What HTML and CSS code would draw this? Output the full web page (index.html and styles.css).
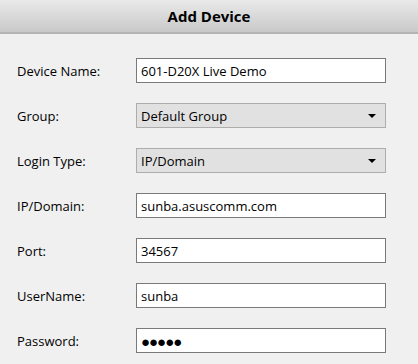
FILE: index.html
```html
<!DOCTYPE html>
<html>
<head>
<meta charset="utf-8">
<link rel="stylesheet" href="styles.css">
</head>
<body>
<div class="dialog">
  <div class="header">Add Device</div>
  <div class="form">
    <div class="row"><span class="label">Device Name:</span><div class="field">601-D20X Live Demo</div></div>
    <div class="row"><span class="label">Group:</span><div class="field select">Default Group<span class="arrow"></span></div></div>
    <div class="row"><span class="label">Login Type:</span><div class="field select">IP/Domain<span class="arrow"></span></div></div>
    <div class="row"><span class="label">IP/Domain:</span><div class="field">sunba.asuscomm.com</div></div>
    <div class="row"><span class="label">Port:</span><div class="field">34567</div></div>
    <div class="row"><span class="label">UserName:</span><div class="field">sunba</div></div>
    <div class="row"><span class="label">Password:</span><div class="field dots">●●●●●</div></div>
  </div>
</div>
</body>
</html>
```

FILE: styles.css
```css
html, body {
  margin: 0;
  padding: 0;
  background: #f0f0f0;
}
.dialog {
  width: 418px;
  height: 364px;
  background: #f0f0f0;
  font-family: "Open Sans", "Noto Sans", sans-serif;
  color: #000;
}
.header {
  height: 32px;
  border-bottom: 2px solid #b4b4b4;
  background: linear-gradient(#e9e9e9, #c9c9c9);
  display: flex;
  align-items: center;
  justify-content: center;
  font-weight: bold;
  font-size: 15px;
}
.form {
  padding: 24px 0 0 0;
  display: flex;
  flex-direction: column;
  gap: 20px;
}
.row {
  display: flex;
  align-items: center;
  height: 25px;
}
.label {
  width: 136px;
  padding-left: 17px;
  box-sizing: border-box;
  font-size: 13px;
}
.field {
  width: 250px;
  height: 25px;
  box-sizing: border-box;
  border: 1px solid #7a7a7a;
  background: #fff;
  display: flex;
  align-items: center;
  padding-left: 4px;
  font-size: 13px;
  position: relative;
}
.select {
  background: #e1e1e1;
  border-color: #adadad;
}
.arrow {
  position: absolute;
  right: 9px;
  top: 10px;
  width: 0;
  height: 0;
  border-left: 4px solid transparent;
  border-right: 4px solid transparent;
  border-top: 4px solid #000;
}
.dots {
  font-size: 15px;
  letter-spacing: -1px;
}
```
